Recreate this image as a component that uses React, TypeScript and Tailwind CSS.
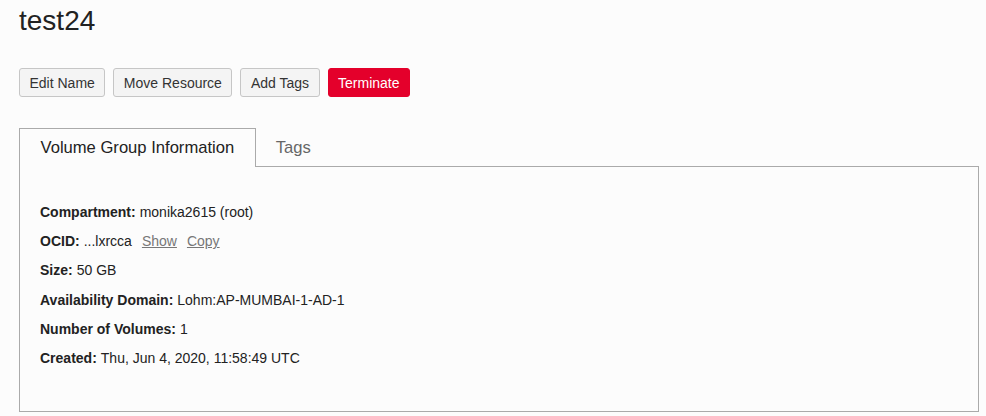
import React, { useState } from "react";

const font = { fontFamily: '"Liberation Sans", Arial, Helvetica, sans-serif' };

type Row = { label: string; value: string; actions?: string[] };

const rows: Row[] = [
  { label: "Compartment:", value: "monika2615 (root)" },
  { label: "OCID:", value: "...lxrcca", actions: ["Show", "Copy"] },
  { label: "Size:", value: "50 GB" },
  { label: "Availability Domain:", value: "Lohm:AP-MUMBAI-1-AD-1" },
  { label: "Number of Volumes:", value: "1" },
  { label: "Created:", value: "Thu, Jun 4, 2020, 11:58:49 UTC" },
];

function ActionButton({ label, danger }: { label: string; danger?: boolean }) {
  return (
    <button
      type="button"
      className={`h-[29px] rounded-[3px] border px-[9.5px] text-[14px] leading-none ${
        danger
          ? "border-[#e4002b] bg-[#e4002b] text-white"
          : "border-[#c6c6c6] bg-[#f4f4f4] text-[#333]"
      }`}
    >
      {label}
    </button>
  );
}

export default function App() {
  const [tab, setTab] = useState<"info" | "tags">("info");

  return (
    <div
      className="h-[416px] w-[986px] overflow-hidden bg-[#fcfcfc] pl-[19px] text-[#222]"
      style={font}
    >
      <h1 className="pt-[4px] text-[28px] leading-[34px] font-normal">test24</h1>

      <div className="mt-[30px] flex gap-2">
        <ActionButton label="Edit Name" />
        <ActionButton label="Move Resource" />
        <ActionButton label="Add Tags" />
        <ActionButton label="Terminate" danger />
      </div>

      <div className="mt-[31px] w-[960px]">
        <div className="flex h-[38px]">
          <button
            type="button"
            onClick={() => setTab("info")}
            className={`h-[39px] px-[20.5px] pt-[1px] text-[16.6px] ${
              tab === "info"
                ? "z-10 border border-b-0 border-[#aaa] bg-[#fcfcfc] text-[#222]"
                : "text-[#666]"
            }`}
          >
            Volume Group Information
          </button>
          <button
            type="button"
            onClick={() => setTab("tags")}
            className={`h-[39px] px-[20px] pt-[1px] text-[16.6px] ${
              tab === "tags"
                ? "z-10 border border-b-0 border-[#aaa] bg-[#fcfcfc] text-[#222]"
                : "text-[#666]"
            }`}
          >
            Tags
          </button>
        </div>
        <div className="h-[246px] border border-[#aaa] bg-[#fcfcfc] px-[20px] pt-[31px]">
          {tab === "info" && (
            <div className="flex flex-col">
              {rows.map((row) => (
                <div key={row.label} className="flex h-[29.2px] items-center text-[14px]">
                  <span className="font-bold">{row.label}</span>
                  <span className="ml-1">{row.value}</span>
                  {row.actions?.map((a) => (
                    <a
                      key={a}
                      href="#"
                      className="ml-[10px] text-[#777] underline"
                    >
                      {a}
                    </a>
                  ))}
                </div>
              ))}
            </div>
          )}
        </div>
      </div>
    </div>
  );
}
